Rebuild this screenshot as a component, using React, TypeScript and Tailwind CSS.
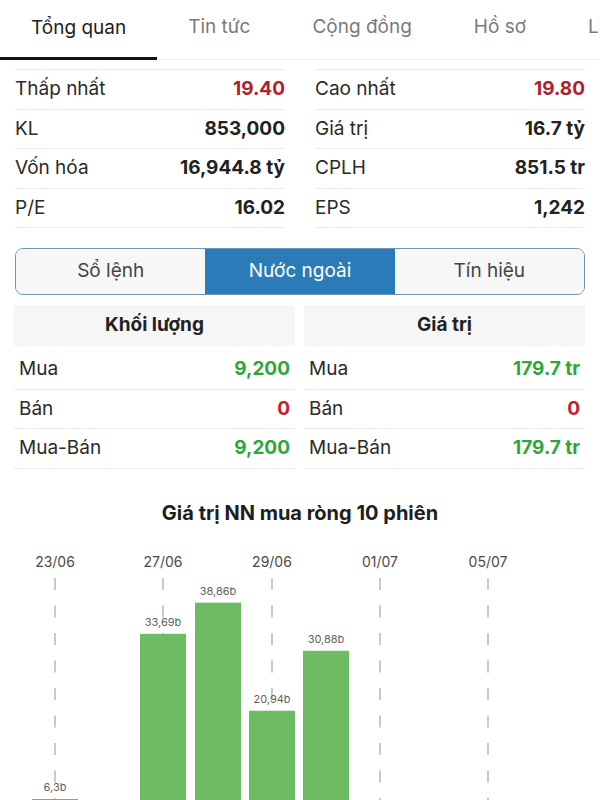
import React from "react";

const tabs = ["Tổng quan", "Tin tức", "Cộng đồng", "Hồ sơ", "Lịch sử"];

const statsLeft = [
  { label: "Thấp nhất", value: "19.40", red: true },
  { label: "KL", value: "853,000" },
  { label: "Vốn hóa", value: "16,944.8 tỷ" },
  { label: "P/E", value: "16.02" },
];

const statsRight = [
  { label: "Cao nhất", value: "19.80", red: true },
  { label: "Giá trị", value: "16.7 tỷ" },
  { label: "CPLH", value: "851.5 tr" },
  { label: "EPS", value: "1,242" },
];

const foreignVol = [
  { label: "Mua", value: "9,200", color: "text-[#2ca83a]" },
  { label: "Bán", value: "0", color: "text-[#c4222a]" },
  { label: "Mua-Bán", value: "9,200", color: "text-[#2ca83a]" },
];

const foreignVal = [
  { label: "Mua", value: "179.7 tr", color: "text-[#2ca83a]" },
  { label: "Bán", value: "0", color: "text-[#c4222a]" },
  { label: "Mua-Bán", value: "179.7 tr", color: "text-[#2ca83a]" },
];

const dates = [
  { label: "23/06", x: 55 },
  { label: "27/06", x: 163 },
  { label: "29/06", x: 272 },
  { label: "01/07", x: 380 },
  { label: "05/07", x: 488 },
];

// bar centres sit on half steps of the date grid
const bars = [
  { cx: 55, v: 6.3, label: "6,3b" },
  { cx: 163, v: 33.69, label: "33,69b" },
  { cx: 218, v: 38.86, label: "38,86b" },
  { cx: 272, v: 20.94, label: "20,94b" },
  { cx: 326, v: 30.88, label: "30,88b" },
];

const StatRow = ({ label, value, red }: { label: string; value: string; red?: boolean }) => (
  <div className="h-[39.5px] flex items-center justify-between border-b border-[#ececec]">
    <span className="text-[#2a2a2a]">{label}</span>
    <span className={red ? "font-bold text-[#b3202a]" : "font-bold text-[#222]"}>{value}</span>
  </div>
);

const ForeignCol = ({
  title,
  rows,
}: {
  title: string;
  rows: { label: string; value: string; color: string }[];
}) => (
  <div className="flex-1">
    <div className="h-[41px] bg-[#f6f6f6] flex items-center justify-center font-bold text-[#222]">
      {title}
    </div>
    <div className="pt-[4px]">
      {rows.map((r) => (
        <div
          key={r.label}
          className="h-[39.5px] flex items-center justify-between px-[5px] border-b border-[#ececec]"
        >
          <span className="text-[#2a2a2a]">{r.label}</span>
          <span className={`font-bold ${r.color}`}>{r.value}</span>
        </div>
      ))}
    </div>
  </div>
);

export default function App() {
  return (
    <div className="w-[600px] h-[800px] overflow-hidden bg-white text-[19px] font-['Inter','Roboto',sans-serif]">
      {/* Top tabs */}
      <div className="h-[60px] flex items-end border-b border-[#f0f0f0] whitespace-nowrap">
        {tabs.map((t, i) => (
          <div
            key={t}
            className={
              i === 0
                ? "shrink-0 px-[31px] h-full flex items-center justify-center text-[#222] border-b-[3px] border-[#111] -mb-px pb-[1px]"
                : "shrink-0 px-[31px] h-full flex items-center justify-center text-[#7a7a7a] pb-[4px]"
            }
          >
            {t}
          </div>
        ))}
      </div>

      {/* Quote stats */}
      <div className="flex gap-[30px] px-[15px] pt-[9px]">
        <div className="flex-1 border-t border-[#ececec]">
          {statsLeft.map((s) => (
            <StatRow key={s.label} {...s} />
          ))}
        </div>
        <div className="flex-1 border-t border-[#ececec]">
          {statsRight.map((s) => (
            <StatRow key={s.label} {...s} />
          ))}
        </div>
      </div>

      {/* Segmented control */}
      <div className="px-[15px] pt-[20px]">
        <div className="h-[47px] flex rounded-[8px] border-[1.5px] border-[#6e93b3] overflow-hidden">
          <div className="flex-1 bg-[#f7f7f7] flex items-center justify-center text-[#444]">Sổ lệnh</div>
          <div className="flex-1 bg-[#2b7bb9] flex items-center justify-center text-white">Nước ngoài</div>
          <div className="flex-1 bg-[#f7f7f7] flex items-center justify-center text-[#444]">Tín hiệu</div>
        </div>
      </div>

      {/* Foreign trading */}
      <div className="flex gap-[9px] pl-[14px] pr-[15px] pt-[10px]">
        <ForeignCol title="Khối lượng" rows={foreignVol} />
        <ForeignCol title="Giá trị" rows={foreignVal} />
      </div>

      {/* Chart */}
      <div className="pt-[29px] text-center font-bold text-[20px] text-[#1e1e1e]">
        Giá trị NN mua ròng 10 phiên
      </div>
      <svg width="600" height="300" className="block mt-[12px]">
        {dates.map((d) => (
          <g key={d.label}>
            <text x={d.x} y={27} textAnchor="middle" fontSize="14" fill="#4a4a4a">
              {d.label}
            </text>
            <line
              x1={d.x}
              y1={38}
              x2={d.x}
              y2={300}
              stroke="#b8b8b8"
              strokeWidth="1.5"
              strokeDasharray="12 15.5"
            />
          </g>
        ))}
        {bars.map((b) => {
          const h = b.v * 6.03;
          const top = 297 - h;
          return (
            <g key={b.label}>
              <rect x={b.cx - 23} y={top} width={46} height={h} fill="#6dbb63" />
              <text x={b.cx} y={top - 8} textAnchor="middle" fontSize="11" fill="#5f5f5f">
                {b.label}
              </text>
            </g>
          );
        })}
      </svg>
    </div>
  );
}
